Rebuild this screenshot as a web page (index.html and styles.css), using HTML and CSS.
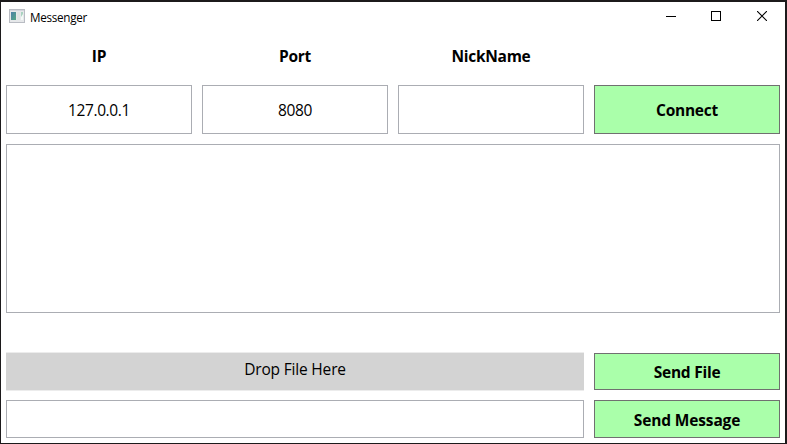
FILE: index.html
```html
<!DOCTYPE html>
<html lang="en">
<head>
<meta charset="utf-8">
<title>Messenger</title>
<link rel="stylesheet" href="styles.css">
</head>
<body>
<div class="window">
  <header class="titlebar">
    <svg class="app-icon" width="16" height="14" viewBox="0 0 16 14">
      <defs><linearGradient id="pane" x1="0" y1="0" x2="1" y2="1"><stop offset="0" stop-color="#4c7fa8"/><stop offset="1" stop-color="#55a884"/></linearGradient></defs>
      <rect x=".5" y=".5" width="15" height="13" fill="#e6e8ea" stroke="#b9bcc3"/>
      <path d="M1 1.5h14" stroke="#d3d5dc"/>
      <rect x="2" y="3" width="5" height="8" fill="url(#pane)"/>
      <rect x="8" y="3" width="3" height="8" fill="#dfe3e3"/>
      <rect x="12" y="3" width="2" height="8" fill="#f5faf7"/>
      <path d="M12 3h2v2l-2 3z" fill="#a9d3c0"/>
    </svg>
    <span class="title">Messenger</span>
    <div class="controls">
      <svg width="10" height="10" viewBox="0 0 10 10"><path d="M0 5.5h10" stroke="#000"/></svg>
      <svg width="10" height="10" viewBox="0 0 10 10"><rect x=".5" y=".5" width="9" height="9" fill="none" stroke="#000"/></svg>
      <svg width="10" height="10" viewBox="0 0 10 10"><path d="M0 0l10 10M10 0L0 10" stroke="#000" stroke-width="1.1"/></svg>
    </div>
  </header>
  <main class="form">
    <span class="label">IP</span>
    <span class="label">Port</span>
    <span class="label">NickName</span>
    <span></span>
    <div class="field">127.0.0.1</div>
    <div class="field">8080</div>
    <div class="field"></div>
    <button class="button">Connect</button>
    <div class="messages"></div>
    <div class="drop">Drop File Here</div>
    <button class="button send-file">Send File</button>
    <div class="field compose"></div>
    <button class="button send-message">Send Message</button>
  </main>
</div>
</body>
</html>
```
FILE: styles.css
```css
* { box-sizing: border-box; }
body { margin: 0; overflow: hidden; }
.window {
  width: 787px;
  height: 444px;
  border: solid #1c1a1b;
  border-width: 2px 2px 1px 1px;
  background: #fff;
  color: #000;
  font: 15.5px/20px "Segoe UI", "Open Sans", "Noto Sans", sans-serif;
  letter-spacing: -0.18px;
}
.titlebar {
  display: flex;
  align-items: center;
  height: 28px;
  padding: 0 18px 0 8px;
}
.app-icon { display: block; }
.title { margin-left: 5px; padding-top: 1px; font-size: 11.7px; line-height: 16px; letter-spacing: -0.3px; }
.controls { display: flex; gap: 35px; margin-left: auto; }
.controls svg { display: block; }
.controls svg:last-child { margin-left: 1px; }
.form {
  display: grid;
  grid-template-columns: repeat(4, 186px);
  grid-template-rows: 45px 49px 169px 67px 38px;
  gap: 10px;
  padding: 0 5px;
}
.label { display: flex; justify-content: center; padding-top: 16px; font-weight: 700; letter-spacing: -0.3px; }
.field {
  display: flex;
  align-items: center;
  justify-content: center;
  padding-top: 1px;
  border: 1px solid #abadb3;
  letter-spacing: -0.4px;
}
.button {
  display: flex;
  align-items: center;
  justify-content: center;
  padding: 1px 0 0;
  border: 1px solid #707070;
  border-radius: 0;
  background: #aaffaa;
  color: #000;
  font: inherit;
  font-weight: 700;
  letter-spacing: -0.25px;
}
.messages { grid-column: 1 / -1; border: 1px solid #abadb3; }
.drop {
  grid-column: span 3;
  display: flex;
  justify-content: center;
  align-self: end;
  height: 39px;
  margin-bottom: -1px;
  padding-top: 6px;
  border: solid #ececec;
  border-width: 1px 0;
  background: #d3d3d3;
}
.send-file { align-self: end; height: 37px; padding-top: 0; }
.send-message { padding-top: 2px; letter-spacing: -0.14px; }
.compose { grid-column: span 3; }
```
